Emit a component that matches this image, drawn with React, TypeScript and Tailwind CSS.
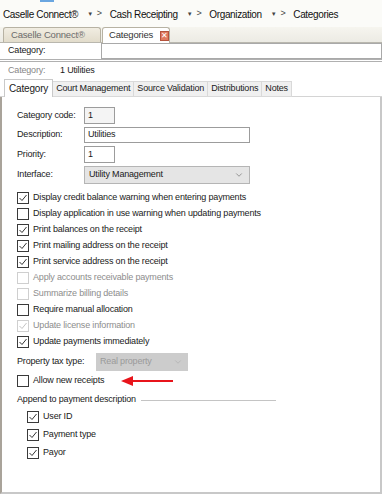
import { ChevronDown } from 'lucide-react'

type Box = { label: string; checked?: boolean; disabled?: boolean }

const options: Box[] = [
  { label: 'Display credit balance warning when entering payments', checked: true },
  { label: 'Display application in use warning when updating payments' },
  { label: 'Print balances on the receipt', checked: true },
  { label: 'Print mailing address on the receipt', checked: true },
  { label: 'Print service address on the receipt', checked: true },
  { label: 'Apply accounts receivable payments', disabled: true },
  { label: 'Summarize billing details', disabled: true },
  { label: 'Require manual allocation' },
  { label: 'Update license information', checked: true, disabled: true },
  { label: 'Update payments immediately', checked: true },
]

const appendTo: Box[] = [
  { label: 'User ID', checked: true },
  { label: 'Payment type', checked: true },
  { label: 'Payor', checked: true },
]

function Check({ checked, disabled }: { checked?: boolean; disabled?: boolean }) {
  return (
    <span
      className={`w-[12px] h-[12px] flex items-center justify-center shrink-0 border ${
        disabled ? 'border-[#cfcfcf] bg-white' : 'border-[#3a3a3a] bg-white'
      }`}
    >
      {checked && (
        <svg width="10" height="10" viewBox="0 0 10 10">
          <path d="M1.5 5 L4 7.5 L8.5 2" fill="none" stroke={disabled ? '#c4c4c4' : '#333'} strokeWidth="1" />
        </svg>
      )}
    </span>
  )
}

function CheckRow({ label, checked, disabled }: Box) {
  return (
    <div className="flex items-center gap-[4px] h-[16px] whitespace-nowrap">
      <Check checked={checked} disabled={disabled} />
      <span className={disabled ? 'text-[#8d8d8d]' : 'text-[#1a1a1a]'}>{label}</span>
    </div>
  )
}

function Crumb({ label, last }: { label: string; last?: boolean }) {
  return (
    <span className="flex items-center">
      <span>{label}</span>
      {!last && (
        <span className="flex items-center ml-[9px] mr-[8px] gap-[4px] text-[#444]">
          <span className="text-[6px]">▼</span>
          <span className="text-[9px]">&gt;</span>
        </span>
      )}
    </span>
  )
}

export default function App() {
  const tabs = ['Category', 'Court Management', 'Source Validation', 'Distributions', 'Notes']

  return (
    <div className="w-[382px] h-[494px] bg-white overflow-hidden relative text-[9px] tracking-[-0.18px] text-[#1a1a1a] font-['Liberation_Sans',Arial,sans-serif]">
      <div className="absolute left-[40px] top-0 w-[14px] h-[2px] bg-[#6aa6e0]" />

      {/* Breadcrumb */}
      <div className="h-[27px] flex items-center pl-[3px] pt-[1px] text-[10px] tracking-[-0.35px] whitespace-nowrap text-[#111] bg-[#fbfbf8]">
        <Crumb label="Caselle Connect®" />
        <Crumb label="Cash Receipting" />
        <Crumb label="Organization" />
        <Crumb label="Categories" last />
      </div>

      {/* Document tabs */}
      <div className="h-[16px] flex items-end pl-[3px] bg-gradient-to-b from-[#f6f5ef] to-[#ecebe4] border-b border-[#b9b7ae] whitespace-nowrap">
        <div className="w-[98px] h-[15px] flex items-center pl-[7px] text-[#6b6b6b] text-[9.5px] rounded-t-[3px] border border-b-0 border-[#b7b2a3] bg-gradient-to-b from-[#f1ede2] to-[#e2dccb]">
          Caselle Connect®
        </div>
        <div className="w-[68px] h-[16px] ml-[1px] flex items-center pl-[6px] gap-[7px] text-[#333] text-[9.5px] rounded-t-[3px] border border-b-0 border-[#b7b2a3] bg-white -mb-px">
          Categories
          <span className="w-[10px] h-[10px] flex items-center justify-center bg-[#e07a5f] border border-[#b5533c] text-white text-[8px] leading-none">
            ✕
          </span>
        </div>
      </div>

      {/* Category lookup */}
      <div className="h-[19px] flex items-center border-b-[3px] border-double border-[#b0b0b0]">
        <span className="w-[101px] pl-[8px]">Category:</span>
        <div className="flex-1 h-[16px] border border-[#a9a9a9] bg-white" />
      </div>
      <div className="h-[17px] flex items-center pl-[8px]">
        <span className="w-[52px] text-[#888]">Category:</span>
        <span>1 Utilities</span>
      </div>

      {/* Detail tabs */}
      <div className="h-[18px] flex items-end pl-[4px] border-b border-[#d4d4d4] whitespace-nowrap">
        {tabs.map((t, i) => (
          <div
            key={t}
            className={
              i === 0
                ? 'h-[18px] px-[4px] flex items-center bg-white border border-b-0 border-[#c9c9c9] text-[10px] -mb-px'
                : 'h-[16px] px-[3px] flex items-center bg-[#f0f0f0] border border-[#d9d9d9] border-l-0 -mb-px'
            }
          >
            {t}
          </div>
        ))}
      </div>

      {/* Panel */}
      <div className="h-[397px] border-l-[2px] border-r-[2px] border-b-[2px] border-l-[#a9a39a] border-r-[#c8c8c8] border-b-[#c8c8c8] pl-[15px] pt-[10px]">
        <div className="grid grid-cols-[67px_auto] items-center gap-y-[3px]">
          <span>Category code:</span>
          <div className="w-[31px] h-[17px] border border-[#9c9c9c] bg-[#f4f4f4] flex items-center pl-[3px]">1</div>
          <span>Description:</span>
          <div className="w-[166px] h-[16px] border border-[#9c9c9c] bg-white flex items-center pl-[3px]">Utilities</div>
          <span>Priority:</span>
          <div className="w-[31px] h-[17px] border border-[#9c9c9c] bg-white flex items-center pl-[3px]">1</div>
          <span>Interface:</span>
          <div className="w-[166px] h-[18px] border border-[#b5b5b5] bg-[#e5e5e5] flex items-center justify-between pl-[4px] pr-[5px]">
            <span>Utility Management</span>
            <ChevronDown className="w-[10px] h-[10px] text-[#666]" strokeWidth={1.5} />
          </div>
        </div>

        <div className="mt-[6px] flex flex-col">
          {options.map((o) => (
            <CheckRow key={o.label} {...o} />
          ))}
        </div>

        <div className="mt-[2px] h-[20px] flex items-center">
          <span className="w-[79px]">Property tax type:</span>
          <div className="w-[92px] h-[18px] bg-[#cccccc] flex items-center justify-between pl-[4px] pr-[5px] text-[#9a9a9a]">
            <span>Real property</span>
            <ChevronDown className="w-[10px] h-[10px] text-[#aaa]" strokeWidth={1.5} />
          </div>
        </div>

        <div className="flex items-center h-[18px]">
          <CheckRow label="Allow new receipts" />
          <svg width="54" height="12" viewBox="0 0 54 12" className="ml-[16px]">
            <path d="M53 6 H12" stroke="#e8141b" strokeWidth="2.2" />
            <path d="M1 6 L13 1 L13 11 Z" fill="#e8141b" />
          </svg>
        </div>

        <div className="mt-[2px] flex items-center gap-[5px] h-[16px]">
          <span>Append to payment description</span>
          <span className="w-[135px] h-px bg-[#c4c4c4]" />
        </div>
        <div className="pl-[10px] pt-[1px] flex flex-col gap-[2px]">
          {appendTo.map((o) => (
            <CheckRow key={o.label} {...o} />
          ))}
        </div>
      </div>
    </div>
  )
}
